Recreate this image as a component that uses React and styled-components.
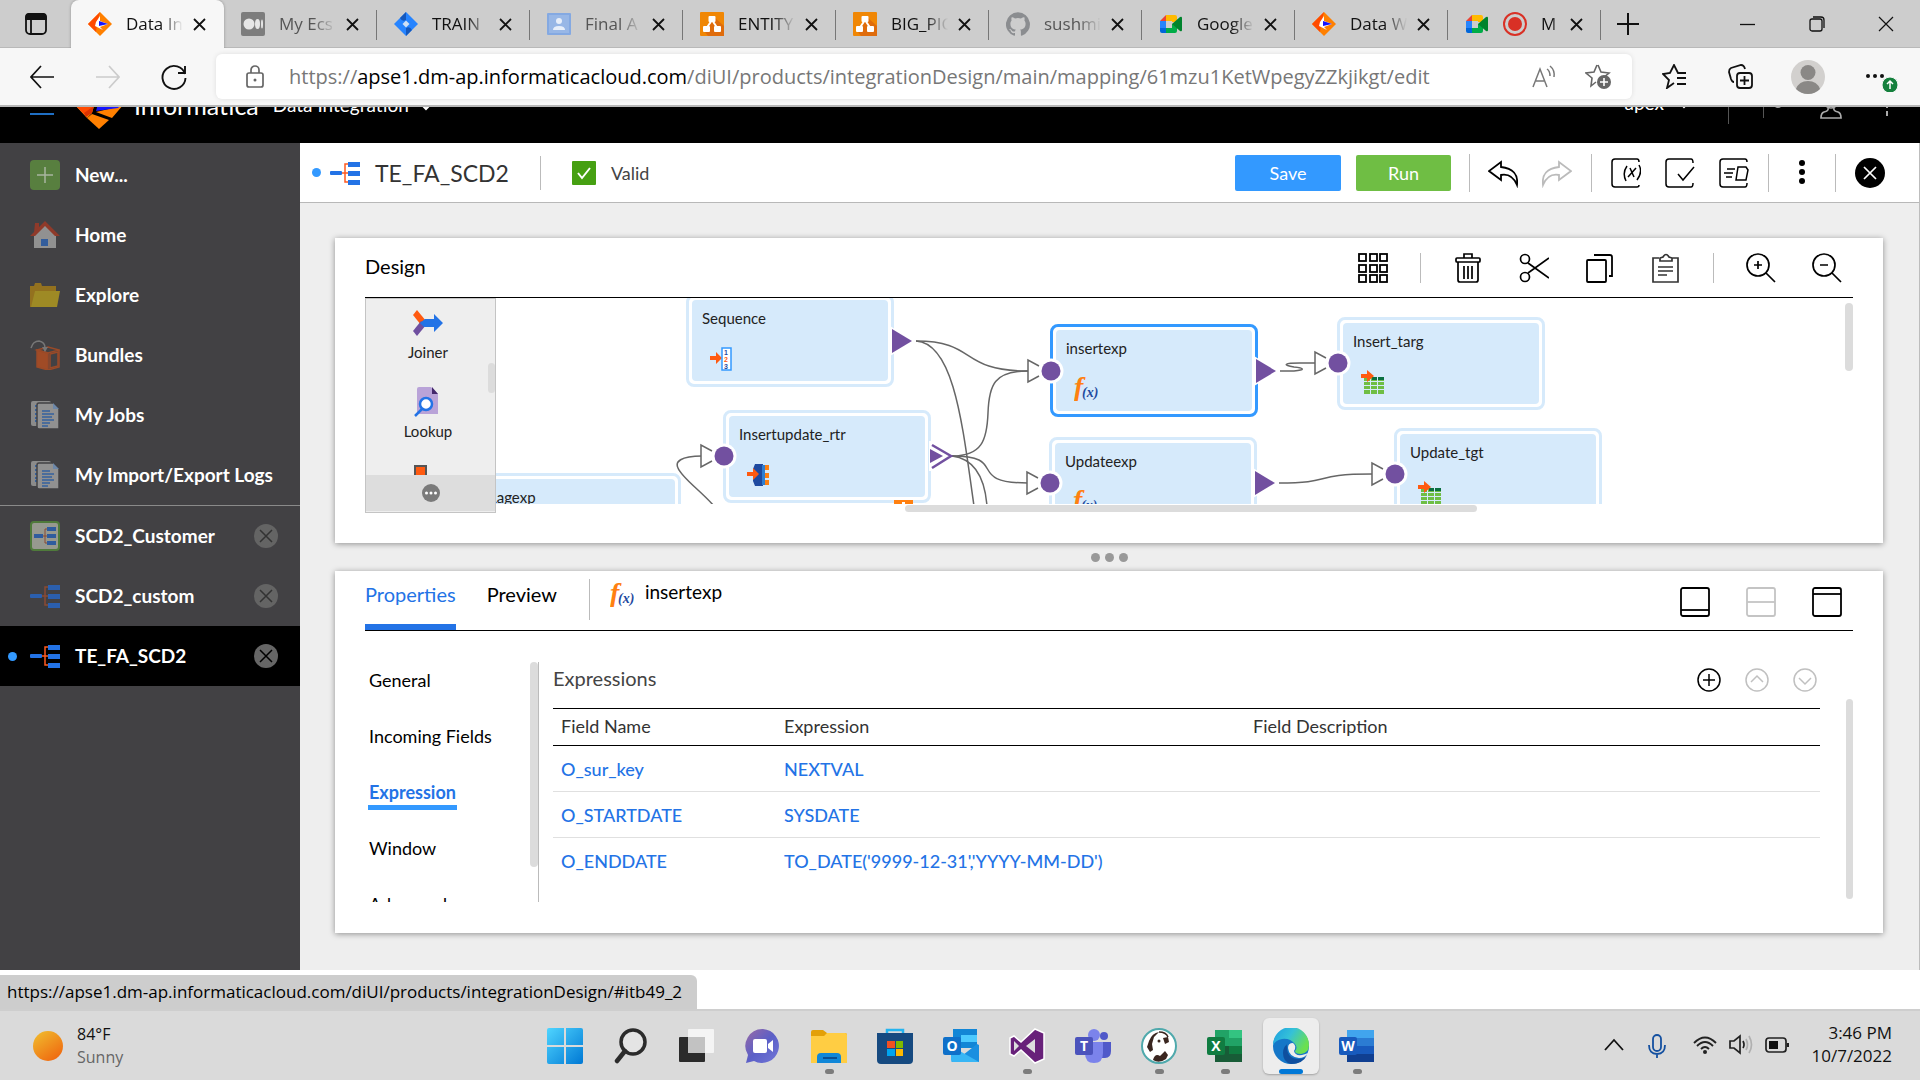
import React from "react";
import styled, { createGlobalStyle, css } from "styled-components";

const uiFont = `"Open Sans", "Noto Sans", sans-serif`;
const appFont = `Lato, "Liberation Sans", sans-serif`;

const GlobalStyle = createGlobalStyle`
  *, *::before, *::after { box-sizing: border-box; }
  body { margin: 0; background: #fff; font-family: ${appFont}; color: #000; }
  button, input { font: inherit; color: inherit; }
  button { border: 0; padding: 0; background: none; cursor: pointer; }
  a { color: inherit; text-decoration: none; }
  svg { display: block; flex: none; }
`;

const Screen = styled.div`
  display: flex;
  flex-direction: column;
  min-height: 100vh;
`;

/* ---------- browser chrome ---------- */

const TabStrip = styled.div`
  display: flex;
  align-items: stretch;
  height: 48px;
  background: #cdcdcd;
  box-shadow: inset 0 -1px 0 #b9b9b9;
  font-family: ${uiFont};
  font-size: 17px;
`;
const Square = styled.button`
  display: flex;
  align-items: center;
  justify-content: center;
  flex: none;
  width: ${(p) => p.$w || 30}px;
  height: ${(p) => p.$h || 30}px;
`;
const BrowserTab = styled.div`
  position: relative;
  display: flex;
  align-items: center;
  flex: 0 1 153px;
  min-width: 0;
  padding: 0 18px 0 17px;
  gap: 14px;
  color: ${(p) => (p.$dim ? "#555" : "#111")};
  ${(p) =>
    p.$active
      ? css`background: #f7f7f7; border-radius: 8px 8px 0 0; box-shadow: 0 0 3px rgba(0, 0, 0, 0.3);
          clip-path: inset(0 -4px 0 -4px);`
      : css`&::after {
          content: ""; position: absolute; right: 0; top: 10px; width: 1px; height: 30px;
          background: #777;
        }`}
`;
const TabTitle = styled.span`
  flex: 1;
  min-width: 0;
  overflow: hidden;
  white-space: nowrap;
  line-height: 24px;
  mask-image: linear-gradient(90deg, #000 60%, transparent);
`;
const CloseButton = styled.button`
  flex: none;
  margin-left: -4px;
`;
const WindowButtons = styled.div`
  display: flex;
  align-items: center;
  margin-left: auto;
`;
const AddressRow = styled.div`
  display: flex;
  align-items: center;
  height: 59px;
  padding: 0 21px;
  background: #f7f7f7;
  border-bottom: 2px solid #b7b7b7;
  gap: 24px;
`;
const AddressBox = styled.div`
  display: flex;
  align-items: center;
  flex: 1;
  min-width: 0;
  height: 45px;
  margin: 0 3px 0 -3px;
  padding: 0 19px 0 29px;
  border-radius: 6px;
  background: #fff;
  box-shadow: 0 0 5px rgba(0, 0, 0, 0.1);
  font-family: ${uiFont};
  font-size: 20px;
  color: #777;
`;
const AddressText = styled.div`
  flex: 1;
  min-width: 0;
  margin-left: 24px;
  overflow: hidden;
  white-space: nowrap;
  line-height: 30px;
  b { font-weight: 400; color: #000; }
`;
const NavGroup = styled.div`
  display: flex;
  align-items: center;
  gap: ${(p) => p.$gap}px;
`;

/* ---------- product header ---------- */

const ProductHeader = styled.header`
  display: flex;
  align-items: flex-end;
  height: 36px;
  padding: 0 31px 0 30px;
  overflow: hidden;
  background: #000;
  color: #fff;
`;
const MenuLine = styled.button`
  width: 24px;
  height: 30px;
  border-bottom: 2px solid #1f6fc4;
`;
const HeaderPart = styled.div`
  display: flex;
  align-items: flex-end;
  margin-left: ${(p) => p.$left || 0}px;
  padding-bottom: ${(p) => p.$bottom}px;
  font-size: ${(p) => p.$size || 20}px;
  line-height: 30px;
`;
const HeaderSpacer = styled.div`flex: 1;`;
const HeaderRule = styled.div`
  width: 1px;
  height: 30px;
  margin-left: ${(p) => p.$left}px;
  margin-bottom: ${(p) => p.$bottom}px;
  background: #555;
`;

/* ---------- workspace ---------- */

const Workspace = styled.div`
  display: flex;
  flex: 1;
  border-right: 1px solid #bdbdbd;
`;
const Sidebar = styled.nav`
  flex: none;
  width: 300px;
  padding-top: 2px;
  background: #424144;
  color: #fff;
`;
const SidebarGroup = styled.div`
  border-bottom: ${(p) => (p.$rule ? "1px solid #8a8a8a" : "0")};
`;
const SidebarRow = styled.div`
  display: flex;
  align-items: center;
  height: 60px;
  padding: 0 22px 0 8px;
  background: ${(p) => (p.$active ? "#000" : "transparent")};
`;
const Dot = styled.span`
  flex: none;
  width: 9px;
  height: 9px;
  margin-right: ${(p) => p.$gap || 13}px;
  border-radius: 50%;
  background: ${(p) => (p.$on ? "#3399ff" : "transparent")};
`;
const SidebarLink = styled.a`
  display: flex;
  align-items: center;
  flex: 1;
  gap: 15px;
  font-size: 19px;
  font-weight: 700;
  line-height: 24px;
  white-space: nowrap;
`;

const Main = styled.main`
  display: flex;
  flex-direction: column;
  flex: 1;
  min-width: 0;
  background: #eee;
`;
const MappingBar = styled.div`
  display: flex;
  align-items: center;
  height: 60px;
  padding: 0 34px 0 12px;
  background: #fff;
  border-bottom: 1px solid #b8b8b8;
`;
const MappingTitle = styled.h1`
  margin: 0 31px 0 15px;
  font-size: 23px;
  font-weight: 400;
  line-height: 30px;
  color: #333;
`;
const Rule = styled.span`
  flex: none;
  width: 1px;
  height: ${(p) => p.$h || 38}px;
  margin: 0 ${(p) => p.$m}px;
  background: #bbb;
`;
const ValidLabel = styled.label`
  display: flex;
  align-items: center;
  gap: 15px;
  margin-left: 31px;
  font-size: 18px;
  color: #444;
`;
const CheckBox = styled.span`
  display: grid;
  width: 24px;
  height: 24px;
  > * { grid-area: 1 / 1; }
  input { appearance: none; width: 24px; height: 24px; margin: 0; background: #46a012; border-radius: 1px; }
`;
const Spacer = styled.span`flex: 1;`;
const ActionButton = styled.button`
  height: 36px;
  width: ${(p) => p.$w}px;
  margin-left: 15px;
  border-radius: 2px;
  background: ${(p) => p.$bg};
  color: #fff;
  font-size: 18px;
`;

const Panels = styled.div`
  display: flex;
  flex-direction: column;
  flex: 1;
  padding: 35px 36px 37px 35px;
`;
const Card = styled.section`
  padding: 0 30px;
  background: #fff;
  box-shadow: 0 1px 6px rgba(0, 0, 0, 0.4);
  flex: ${(p) => (p.$grow ? "1" : "none")};
`;
const DesignHead = styled.div`
  display: flex;
  align-items: center;
  height: 60px;
  padding-right: 11px;
  border-bottom: 1px solid #000;
`;
const Heading = styled.h2`
  margin: 0;
  padding-bottom: 4px;
  font-size: 20px;
  font-weight: 400;
  line-height: 24px;
  color: ${(p) => p.$color || "#000"};
`;
const DesignBody = styled.div`
  display: flex;
  align-items: flex-start;
  padding-bottom: 30px;
`;
const Palette = styled.div`
  display: flex;
  flex-direction: column;
  flex: none;
  width: 131px;
  height: 215px;
  border: 1px solid #c4c4c4;
  background: #eee;
`;
const PaletteList = styled.div`
  display: flex;
  flex: 1;
  min-height: 0;
  overflow: hidden;
`;
const PaletteItems = styled.div`
  display: flex;
  flex-direction: column;
  align-items: center;
  flex: 1;
  padding: 7px 0 0 2px;
`;
const PaletteItem = styled.button`
  display: flex;
  flex-direction: column;
  align-items: center;
  flex: none;
  height: 79px;
  gap: 2px;
  font-size: 15px;
  line-height: 20px;
  color: #222;
`;
const PaletteMore = styled.button`
  display: flex;
  align-items: center;
  justify-content: center;
  height: 37px;
  background: #ddd;
  border-bottom: 1px solid #eee;
`;
const Thumb = styled.div`
  flex: none;
  width: ${(p) => p.$w}px;
  height: ${(p) => p.$h}px;
  margin-top: ${(p) => p.$top || 0}px;
  border-radius: 4px;
  background: #dcdcdc;
`;
const CanvasColumn = styled.div`
  flex: 1;
  min-width: 0;
`;
const CanvasArea = styled.div`
  position: relative;
  height: 206px;
  overflow: hidden;
`;
const HorizontalTrack = styled.div`
  padding: 1px 0 0 409px;
`;
const Links = styled.svg`
  position: absolute;
  left: 0;
  top: 0;
`;
const NodeBox = styled.div`
  position: absolute;
  left: ${(p) => p.$x}px;
  top: ${(p) => p.$y}px;
  width: 208px;
  height: 93px;
  padding: 3px;
  border: 3px solid ${(p) => (p.$selected ? "#3399ff" : "#d6eafb")};
  border-radius: 8px;
  background: #fff;
`;
const NodeFill = styled.div`
  height: 100%;
  padding: 8px 0 0 10px;
  border-radius: 4px;
  background: #d6eafb;
`;
const NodeTitle = styled.div`
  font-size: 15px;
  line-height: 20px;
  color: #222;
`;
const NodeIcon = styled.div`
  padding: 19px 0 0 8px;
`;

const Splitter = styled.div`
  display: flex;
  align-items: center;
  justify-content: center;
  gap: 5px;
  height: 28px;
  i { width: 9px; height: 9px; border-radius: 50%; background: #999; }
`;

const PropertyHead = styled.div`
  display: flex;
  align-items: flex-start;
  height: 60px;
  padding-right: 11px;
  border-bottom: 1px solid #000;
`;
const PropertyTab = styled.button`
  height: 59px;
  margin-right: 31px;
  padding-bottom: 8px;
  border-bottom: 6px solid ${(p) => (p.$active ? "#2373e6" : "transparent")};
  font-size: 20px;
  color: ${(p) => (p.$active ? "#2373e6" : "#000")};
`;
const HeadRule = styled.span`
  width: 1px;
  height: 41px;
  margin: 8px 20px 0 1px;
  background: #bbb;
`;
const SelectedName = styled.div`
  display: flex;
  align-items: flex-start;
  gap: 11px;
  margin-top: 8px;
  font-size: 19px;
  line-height: 26px;
  svg { margin-top: 4px; }
`;
const ViewButtons = styled.div`
  display: flex;
  gap: 36px;
  margin: 16px 0 0 auto;
`;
const PropertyBody = styled.div`
  display: flex;
  align-items: flex-start;
  padding: 31px 0;
`;
const SectionNav = styled.div`
  display: flex;
  flex: none;
  width: 174px;
  height: 240px;
  overflow: hidden;
  border-right: 1px solid #bbb;
`;
const SectionList = styled.div`
  display: flex;
  flex-direction: column;
  align-items: flex-start;
  flex: 1;
  padding: 4px 0 0 3px;
`;
const SectionButton = styled.button`
  flex: none;
  height: 32px;
  margin-bottom: 24px;
  padding: 0 1px;
  border-bottom: 5px solid ${(p) => (p.$active ? "#3399ff" : "transparent")};
  font-size: 18px;
  line-height: 26px;
  font-weight: ${(p) => (p.$active ? 700 : 400)};
  color: ${(p) => (p.$active ? "#2373e6" : "#000")};
`;
const Fields = styled.div`
  flex: 1;
  min-width: 0;
  margin: 0 26px 0 14px;
`;
const FieldsHead = styled.div`
  display: flex;
  align-items: center;
  justify-content: space-between;
  height: 46px;
  padding: 0 3px 10px 0;
`;
const FieldTable = styled.table`
  width: 100%;
  border-collapse: collapse;
  table-layout: fixed;
  font-size: 18px;
  border-top: 1px solid #000;
  th { height: 37px; padding: 0 8px 2px; text-align: left; font-weight: 400; color: #333; border-bottom: 1px solid #000; }
  td { height: 46px; padding: 0 8px; font-weight: 500; color: #2373e6; border-bottom: 1px solid #e0e0e0; white-space: nowrap; }
  tr:last-child td { border-bottom: 0; }
  col:nth-child(1) { width: 223px; }
  col:nth-child(2) { width: 469px; }
`;

/* ---------- status line and taskbar ---------- */

const StatusStrip = styled.div`
  display: flex;
  align-items: flex-end;
  height: 39px;
  background: #fff;
  font-family: ${uiFont};
`;
const StatusBubble = styled.div`
  height: 34px;
  padding: 0 15px 0 7px;
  border-radius: 0 6px 0 0;
  background: #cdcdcd;
  font-size: 17px;
  line-height: 34px;
`;
const Taskbar = styled.footer`
  display: grid;
  grid-template-columns: 1fr auto 1fr;
  align-items: center;
  height: 71px;
  padding: 0 28px 0 30px;
  background: #dadada;
  border-top: 2px solid #cecece;
  font-family: ${uiFont};
  font-size: 16px;
  line-height: 23px;
  color: #111;
`;
const Weather = styled.button`
  display: flex;
  align-items: center;
  justify-self: start;
  gap: 14px;
  padding-left: 3px;
  text-align: left;
  span { display: block; color: #666; }
`;
const Apps = styled.div`
  display: flex;
  gap: 10px;
`;
const AppButton = styled.button`
  display: flex;
  flex-direction: column;
  align-items: center;
  justify-content: flex-end;
  gap: 5px;
  width: 56px;
  height: 56px;
  border-radius: 6px;
  background: ${(p) => (p.$active ? "#ededed" : "transparent")};
  box-shadow: ${(p) => (p.$active ? "0 1px 2px rgba(0,0,0,.25)" : "none")};
`;
const RunMark = styled.i`
  height: 5px;
  width: ${(p) => (p.$active ? 24 : 9)}px;
  border-radius: 3px;
  background: ${(p) => (p.$active ? "#0078d7" : p.$on ? "#7c7c7c" : "transparent")};
`;
const Tray = styled.div`
  display: flex;
  align-items: center;
  justify-self: end;
`;
const TrayStatus = styled.button`
  display: flex;
  gap: 12px;
  margin-left: 27px;
`;
const Clock = styled.button`
  margin-left: 22px;
  padding-bottom: 4px;
  text-align: right;
  font-size: 17px;
`;

/* ---------- drawings ---------- */

const Svg = ({ s = 24, w, h, vb, sw = 1.5, c = "none", stroke = "currentColor", children }) => (
  <svg width={w || s} height={h || s} viewBox={vb || `0 0 ${w || s} ${h || s}`} fill={c} stroke={stroke} strokeWidth={sw} aria-hidden="true">
    {children}
  </svg>
);
const Art = (p) => <Svg stroke="none" sw={0} {...p} />;

const Cross = ({ s = 13, sw = 1.8, color = "#111" }) => (
  <Svg s={s} sw={sw} stroke={color}><path d={`M1 1L${s - 1} ${s - 1}M${s - 1} 1L1 ${s - 1}`} /></Svg>
);

const InfaIcon = () => (
  <Art s={24}>
    <path d="M12 0L24 12L12 24L0 12Z" fill="#ff8000" />
    <path d="M12 0L0 12L8 20L9 12Z" fill="#ff4a00" />
    <path d="M12 4L12 9L20 12L12 15L15 18L7 14L8 10Z" fill="#fff" />
    <path d="M11 9L20 12L11 14Z" fill="#1414ff" />
  </Art>
);
const MediumIcon = () => (
  <Art s={24}>
    <rect width="24" height="24" rx="2" fill="#7d7d7d" />
    <circle cx="8" cy="12" r="5.5" fill="#e6e6e6" /><ellipse cx="16.500" cy="12" rx="2.500" ry="5" fill="#e6e6e6" /><ellipse cx="21" cy="12" rx="1" ry="4.500" fill="#e6e6e6" />
  </Art>
);
const JiraIcon = () => (
  <Art s={24}>
    <path d="M12 0L24 12L12 24L0 12Z" fill="#2684ff" />
    <path d="M12 0L6 6Q8 10 12 8Z" fill="#1558bc" /><path d="M12 24L18 18Q16 14 12 16Z" fill="#1558bc" />
    <path d="M12 8.500L15.500 12L12 15.500L8.500 12Z" fill="#cfe0f5" />
  </Art>
);
const PersonIcon = () => (
  <Art s={24}>
    <rect width="24" height="22" y="1" rx="1" fill="#84a9e2" /><rect x="2" y="3" width="20" height="18" fill="#98b7e6" />
    <circle cx="12" cy="9" r="3" fill="#e8effa" /><path d="M6 18q0-4 6-4t6 4z" fill="#e8effa" />
  </Art>
);
const DrawioIcon = () => (
  <Art s={24}>
    <rect width="24" height="24" rx="1" fill="#f08705" /><path d="M14 5L24 14V24H8L5 20Z" fill="#df6c0c" />
    <path d="M12 8L6 17M12 8L18 17" stroke="#fff" strokeWidth="2" />
    <rect x="8.500" y="4" width="7" height="6" rx="1" fill="#fff" /><rect x="3" y="14" width="7" height="6" rx="1" fill="#fff" /><rect x="14" y="14" width="7" height="6" rx="1" fill="#fff" />
  </Art>
);
const GithubIcon = () => (
  <Art s={24} c="#8b8d90">
    <path d="M12 .3a12 12 0 0 0-3.8 23.400c.6.100.800-.300.800-.600v-2.100c-3.300.700-4-1.600-4-1.600-.500-1.400-1.300-1.700-1.300-1.700-1.100-.800.100-.700.100-.700 1.200.100 1.800 1.200 1.800 1.200 1.100 1.800 2.800 1.300 3.500 1 .100-.800.400-1.300.800-1.600-2.700-.300-5.500-1.300-5.500-5.900 0-1.300.500-2.400 1.200-3.200-.100-.300-.500-1.500.100-3.200 0 0 1-.300 3.300 1.200a11.500 11.500 0 0 1 6 0c2.300-1.500 3.300-1.200 3.300-1.200.600 1.700.200 2.900.100 3.200.800.800 1.200 1.900 1.200 3.200 0 4.600-2.800 5.600-5.500 5.900.400.400.800 1.100.800 2.200v3.300c0 .300.200.700.800.600A12 12 0 0 0 12 .3z" />
  </Art>
);
const MeetIcon = () => (
  <Art s={24}>
    <path d="M1 9L7 3V9Z" fill="#ea4335" /><path d="M7 3h9q2 0 2 2v5h-5V9H7Z" fill="#ffba00" />
    <path d="M1 9h6v7H1Z" fill="#2684fc" /><path d="M1 16h6v5H3q-2 0-2-2Z" fill="#0066da" />
    <path d="M7 16h6v-4h5v7q0 2-2 2H7Z" fill="#00ac47" /><path d="M13 12L21 5q2-1 2 1v12q0 2-2 1Z" fill="#00832d" />
    <rect x="7" y="9" width="6" height="7" fill="#cdcdcd" />
  </Art>
);
const RecordIcon = () => (
  <Svg s={24} sw={2} stroke="#d93025"><circle cx="12" cy="12" r="11" /><circle cx="12" cy="12" r="7" fill="#d93025" stroke="none" /></Svg>
);

const MappingIcon = ({ dim }) => (
  <Svg w={30} h={24} sw={1.500} stroke={dim ? "#8a4a33" : "#ff5a1f"}>
    <path d="M11 12H24M24 3H15V21H24" />
    <g fill={dim ? "#2b5fae" : "#2373e6"} stroke="none"><rect y="10" width="12" height="4" rx="1" /><rect x="18" y="1" width="12" height="5" /><rect x="18" y="10" width="12" height="5" /><rect x="18" y="19" width="12" height="5" /></g>
  </Svg>
);
const NewIcon = () => (
  <Svg s={30} sw={1.500} stroke="#a8b5a0"><rect width="30" height="30" rx="4" fill="#587f3f" stroke="none" /><path d="M7 15H23M15 7V23" /></Svg>
);
const HomeIcon = () => (
  <Art s={30}>
    <path d="M5 3h4v10H4Z" fill="#8f3a2a" /><path d="M4 28V15L15 4L26 15V28Z" fill="#919191" /><path d="M0 16L15 1L30 16H25L15 6L5 16Z" fill="#8f3a2a" /><rect x="11" y="19" width="7" height="7" fill="#335d9c" />
  </Art>
);
const FolderIcon = () => (
  <Art s={30}><path d="M0 6h4l1-3h6l1 3h14v21H0Z" fill="#93711f" /><path d="M5 11H30L27 27H1Z" fill="#9e8a25" /></Art>
);
const BundleIcon = () => (
  <Svg s={30} sw={1.500} stroke="#9a4a28">
    <path d="M7 10L18 13V30L7 27Z" fill="#a04b26" /><path d="M7 10L18 7L29 10L18 13Z" /><path d="M29 10V27L18 30" /><path d="M20 14L28 12V26L20 28Z" fill="#424144" />
    <path d="M1 8Q3 1 9 1Q15 2 15 8" stroke="#777" /><path d="M12 7L15 12L18 7Z" fill="#777" stroke="none" />
  </Svg>
);
const LogsIcon = () => (
  <Art s={30}>
    <rect x="1" y="1" width="20" height="25" rx="2" fill="#8b8b8b" /><path d="M5 6H9M5 10H9M5 14H9M5 18H9M5 21H9" stroke="#35619f" strokeWidth="2" />
    <path d="M9 3H23L29 9V29H9Q7 29 7 27V5Q7 3 9 3Z" fill="#919191" stroke="#424144" strokeWidth="1.500" /><path d="M23 3V9H29Z" fill="#6d87a8" />
    <path d="M12 11H20M12 14H24M12 17H22M12 20H24M12 23H20M12 26H18" stroke="#35619f" strokeWidth="1.500" />
  </Art>
);
const CustomerIcon = () => (
  <Svg s={30} sw={1}>
    <rect x="1" y="1" width="28" height="28" rx="3" fill="#97998f" stroke="#4f7a3b" strokeWidth="2" />
    <path d="M12 15H20M20 8H15V22H20" stroke="#8a4a33" />
    <g fill="#2f5c9e" stroke="none"><rect x="4" y="13" width="9" height="4" /><rect x="17" y="6" width="9" height="4" /><rect x="17" y="13" width="9" height="4" /><rect x="17" y="20" width="9" height="4" /></g>
  </Svg>
);
const RoundClose = ({ dark }) => (
  <Svg s={24} sw={1.500} stroke={dark ? "#000" : "#333"}><circle cx="12" cy="12" r="12" fill={dark ? "#666" : "#646464"} stroke="none" /><path d="M6 6L18 18M18 6L6 18" /></Svg>
);

const FxIcon = () => (
  <Art s={24}>
    <text x="0" y="19" fontFamily="Liberation Serif" fontSize="28" fontWeight="700" fontStyle="italic" fill="#ff8010">f</text>
    <text x="8" y="20" fontFamily="Liberation Serif" fontSize="14" fontWeight="700" fontStyle="italic" fill="#1f4aa0">(x)</text>
  </Art>
);
const arrow = "M0 9h6V5l6 6l-6 6v-4H0Z";
const SequenceIcon = () => (
  <Art s={24}>
    <path d={arrow} fill="#ff5a10" />
    <rect x="12" y="1" width="9" height="22" fill="#fff" stroke="#3399ff" strokeWidth="1.500" />
    <g fontFamily="Liberation Sans" fontSize="7" fontWeight="700"><text x="14" y="8" fill="#1f4aa0">1</text><text x="14" y="15" fill="#ff5a10">2</text><text x="14" y="22" fill="#1f4aa0">3</text></g>
  </Art>
);
const RouterIcon = () => (
  <Art s={24}>
    <path d="M8 1H16V23H8L6 18V6Z" fill="#1f4aa0" /><path d="M16 2h6v5h-6zM16 10h6v5h-6zM16 17h6v5h-6z" fill="#ff8010" /><path d="M15 2h3v20h-3z" fill="#2f7fd0" /><path d={arrow} fill="#ff5a10" stroke="#d6eafb" />
  </Art>
);
const TargetIcon = () => (
  <Art s={24}>
    <rect x="3" y="7" width="20" height="17" fill="#6fbe44" /><rect x="11" y="7" width="12" height="3" fill="#0b7040" />
    <path d="M3 11.500H23M3 15.500H23M3 19.500H23M9.500 7V24M16.500 7V24" stroke="#d6eafb" strokeWidth="1" />
    <path d="M0 4h6V0l7 6l-7 6v-4H0Z" fill="#ff5a10" />
  </Art>
);
const JoinerIcon = () => (
  <Art w={30} h={34} vb="0 -4 30 34">
    <path d="M4 0L13 11L8 15L0 5Z" fill="#ff5a10" /><path d="M4 26L13 15L8 11L0 21Z" fill="#6f4fa0" /><path d="M7 13L12 9H21V4L30 13L21 22V17H11Z" fill="#2373e6" />
  </Art>
);
const LookupIcon = () => (
  <Svg w={30} h={34} vb="0 -2 30 34" sw={2.500} stroke="#2373e6">
    <path d="M6 0H18L25 7V27H4V2Q4 0 6 0Z" fill="#b9a3d8" stroke="none" /><path d="M19 0V7H25Z" fill="#43286b" stroke="none" />
    <circle cx="13" cy="17" r="6" fill="#fff" /><path d="M9 22L2 29" />
  </Svg>
);

const OutPort = ({ x, y }) => <path d={`M${x} ${y - 12}L${x + 20} ${y}L${x} ${y + 12}Z`} fill="#7250a0" stroke="#fff" strokeWidth="3" paintOrder="stroke" />;
const InPort = ({ x, y }) => (
  <g>
    <circle cx={x} cy={y} r="12.500" fill="#fff" />
    <path d={`M${x - 12} ${y - 5}L${x - 23} ${y - 11}V${y + 11}L${x - 12} ${y + 5}`} fill="#fff" stroke="#666" strokeWidth="1.500" />
    <circle cx={x} cy={y} r="9.500" fill="#7250a0" />
  </g>
);

const nodes = [
  { name: "Lagexp", x: -23, y: 175 },
  { name: "Sequence", x: 190, y: -4, icon: <SequenceIcon /> },
  { name: "Insertupdate_rtr", x: 227, y: 112, icon: <RouterIcon /> },
  { name: "insertexp", x: 554, y: 26, icon: <FxIcon />, selected: true },
  { name: "Updateexp", x: 553, y: 139, icon: <FxIcon /> },
  { name: "Insert_targ", x: 841, y: 19, icon: <TargetIcon /> },
  { name: "Update_tgt", x: 898, y: 130, icon: <TargetIcon /> },
];

function DesignCanvas() {
  return (
    <CanvasArea>
      {nodes.map((n) => (
        <NodeBox key={n.name} $x={n.x} $y={n.y} $selected={n.selected}>
          <NodeFill>
            <NodeTitle>{n.name}</NodeTitle>
            <NodeIcon>{n.icon}</NodeIcon>
          </NodeFill>
        </NodeBox>
      ))}
      <Links width="1347" height="206" viewBox="496 298 1347 206" fill="none" aria-hidden="true">
        <g stroke="#666" strokeWidth="1.500">
          <path d="M916 341C978 341 958 371 1028 371" />
          <path d="M916 341C955 343 963 430 974 506" />
          <path d="M952 456C982 456 987 440 988 413C989 385 994 371 1028 371" />
          <path d="M952 456C1010 456 964 483 1028 483" />
          <path d="M952 456C976 459 985 480 987 506" />
          <path d="M702 456C680 456 675 462 678 468C682 478 700 490 714 506" />
          <path d="M1280 371H1294C1306 370 1304 368 1294 367C1282 365 1284 363 1300 363H1315" />
          <path d="M1279 483C1335 483 1310 474 1372 474" />
        </g>
        <InPort x={1051} y={371} /><InPort x={1050} y={483} /><InPort x={724} y={456} /><InPort x={1338} y={363} /><InPort x={1395} y={474} />
        <OutPort x={892} y={341} /><OutPort x={1256} y={371} /><OutPort x={1255} y={483} />
        <path d="M929 441H935V471H929Z" fill="#fff" />
        <path d="M930 449L943 456L930 463Z" fill="#7250a0" />
        <path d="M932 445L951 456L932 468" stroke="#7250a0" strokeWidth="2.500" />
        <path d="M894 500H913V506H894Z" fill="#ff8010" /><path d="M902 502H905V506H902Z" fill="#fff" />
      </Links>
    </CanvasArea>
  );
}

const tabs = [
  ["Data In", <InfaIcon />, { $active: true }],
  ["My Ecs", <MediumIcon />, { $dim: true }],
  ["TRAIN", <JiraIcon />, {}],
  ["Final A", <PersonIcon />, { $dim: true }],
  ["ENTITY", <DrawioIcon />, {}],
  ["BIG_PIC", <DrawioIcon />, {}],
  ["sushmi", <GithubIcon />, { $dim: true }],
  ["Google", <MeetIcon />, {}],
  ["Data W", <InfaIcon />, {}],
  ["M", <><MeetIcon /><RecordIcon /></>, {}],
];

function BrowserChrome() {
  return (
    <>
      <TabStrip>
        <Square $w={71} $h={48} aria-label="Tab actions">
          <Svg s={22} sw={1.800} stroke="#111"><rect x="1" y="1" width="20" height="20" rx="4" /><path d="M1 6V4q0-3 3-3h14q3 0 3 3v2zM6 6V21" /><rect x="1" y="2" width="20" height="4" fill="#111" stroke="none" /></Svg>
        </Square>
        {tabs.map(([title, icon, flags]) => (
          <BrowserTab key={title} {...flags}>
            {icon}
            <TabTitle>{title}</TabTitle>
            <CloseButton aria-label={`Close ${title}`}><Cross /></CloseButton>
          </BrowserTab>
        ))}
        <Square $w={54} $h={48} aria-label="New tab"><Svg s={22} sw={2} stroke="#111"><path d="M11 0V22M0 11H22" /></Svg></Square>
        <WindowButtons>
          <Square $w={70} $h={48} aria-label="Minimize"><Svg s={15} sw={1.300} stroke="#111"><path d="M0 7.500H15" /></Svg></Square>
          <Square $w={69} $h={48} aria-label="Restore"><Svg s={16} sw={1.300} stroke="#111"><rect x="1" y="3" width="12" height="12" rx="2" /><path d="M4 1h8q3 0 3 3v8" /></Svg></Square>
          <Square $w={69} $h={48} aria-label="Close window"><Cross s={16} sw={1.200} /></Square>
        </WindowButtons>
      </TabStrip>
      <AddressRow>
        <NavGroup $gap={24}>
          <Square $w={42} aria-label="Back"><Svg s={24} sw={1.700} stroke="#111"><path d="M24 12H1M11 1L1 12L11 23" /></Svg></Square>
          <Square $w={42} aria-label="Forward"><Svg s={24} sw={1.700} stroke="#ccc"><path d="M0 12H23M13 1L23 12L13 23" /></Svg></Square>
          <Square $w={42} aria-label="Refresh"><Svg s={26} sw={1.900} stroke="#111"><path d="M24 10A11.500 11.500 0 1 0 24.500 14M24 2V9H17" /></Svg></Square>
        </NavGroup>
        <AddressBox>
          <Svg w={20} h={24} sw={1.700} stroke="#666"><rect x="2" y="8" width="16" height="14" rx="2" /><path d="M6 8V5a4 4 0 0 1 8 0v3" /><circle cx="10" cy="15" r="1.500" fill="#666" stroke="none" /></Svg>
          <AddressText>https://<b>apse1.dm-ap.informaticacloud.com</b>/diUI/products/integrationDesign/main/mapping/61mzu1KetWpegyZZkjikgt/edit</AddressText>
          <NavGroup $gap={24}>
            <Square aria-label="Read aloud"><Svg s={24} sw={1.500} stroke="#777"><path d="M1 22L8 4L15 22M4 16H12M15 4Q18 6 18 11M18 1Q23 5 22 12" /></Svg></Square>
            <Square aria-label="Add to favorites"><Svg s={27} sw={1.600} stroke="#666"><path d="M13 2L16 9L24 10L18 15M11 19L6 23L7 15L1 10L9 9L12 2" /><circle cx="19" cy="19" r="7" fill="#666" stroke="none" /><path d="M19 15V23M15 19H23" stroke="#fff" /></Svg></Square>
          </NavGroup>
        </AddressBox>
        <NavGroup $gap={36}>
          <Square aria-label="Favorites"><Svg s={25} sw={1.800} stroke="#111"><path d="M24 9H16L12 1L8 9L1 10L7 16L5 24L12 19M15 14H24M15 20H24" /></Svg></Square>
          <Square aria-label="Collections"><Svg s={25} sw={1.800} stroke="#111"><rect x="9" y="9" width="15" height="15" rx="3" /><path d="M16.500 12V21M12 16.500H21M6 18Q4 18 3 15L1 8Q1 5 3 4L13 1Q16 1 17 5" /></Svg></Square>
          <Square $w={34} $h={34} aria-label="Profile"><Art s={34}><circle cx="17" cy="17" r="17" fill="#d2d0ce" /><circle cx="17" cy="12.500" r="7.500" fill="#8a8886" /><path d="M5 29Q8 21 17 21T29 29Q24 34 17 34T5 29Z" fill="#8a8886" /></Art></Square>
          <Square $w={38} aria-label="Settings"><Svg w={38} h={30} stroke="none"><g fill="#111"><circle cx="7" cy="14" r="2" /><circle cx="14" cy="14" r="2" /><circle cx="21" cy="14" r="2" /></g><circle cx="29" cy="23" r="8" fill="#15803d" stroke="#f7f7f7" strokeWidth="1" /><path d="M29 27V19M26 22L29 19L32 22" stroke="#fff" strokeWidth="1.500" /></Svg></Square>
        </NavGroup>
      </AddressRow>
    </>
  );
}

const sidebarMain = [["New...", <NewIcon />], ["Home", <HomeIcon />], ["Explore", <FolderIcon />], ["Bundles", <BundleIcon />], ["My Jobs", <LogsIcon />], ["My Import/Export Logs", <LogsIcon />]];
const sidebarOpen = [["SCD2_Customer", <CustomerIcon />], ["SCD2_custom", <MappingIcon dim />], ["TE_FA_SCD2", <MappingIcon />, true]];

const fields = [
  ["O_sur_key", "NEXTVAL"],
  ["O_STARTDATE", "SYSDATE"],
  ["O_ENDDATE", "TO_DATE('9999-12-31','YYYY-MM-DD')"],
];

const letterApp = (letter, tile, sheets) => (
  <Art s={36}>
    {sheets}
    <rect x="0" y="9" width="18" height="18" rx="2" fill={tile} />
    <text x="9" y="23" textAnchor="middle" fontFamily="Open Sans" fontSize="14" fontWeight="700" fill="#fff">{letter}</text>
  </Art>
);

const apps = [
  ["Start", <Art s={36}><defs><linearGradient id="win" x1="0" y1="0" x2="1" y2="1"><stop offset="0" stopColor="#4fd5ff" /><stop offset="1" stopColor="#0078d4" /></linearGradient></defs><path d="M2 0H17V17H0V2Q0 0 2 0ZM19 0H34Q36 0 36 2V17H19ZM0 19H17V36H2Q0 36 0 34ZM19 19H36V34Q36 36 34 36H19Z" fill="url(#win)" /></Art>],
  ["Search", <Svg s={36} sw={3.500} stroke="#2b2b2b"><circle cx="20" cy="14" r="12" fill="#e4e4e4" /><path d="M12 23L4 33" strokeWidth="4.500" strokeLinecap="round" /></Svg>],
  ["Task view", <Art s={36}><rect x="0" y="9" width="26" height="25" rx="1" fill="#2b2b2b" /><rect x="9" y="1" width="26" height="24" rx="1" fill="#f4f4f4" /><rect x="9" y="9" width="17" height="16" fill="#c2c2c2" /></Art>],
  ["Chat", <Art s={36}><defs><linearGradient id="chat" x1="0" y1="0" x2="1" y2="1"><stop offset="0" stopColor="#9a6aa5" /><stop offset=".5" stopColor="#5b5fc7" /><stop offset="1" stopColor="#7277d8" /></linearGradient></defs><path d="M18 1A17 17 0 1 1 9 33L1 35L3 27A17 17 0 0 1 18 1Z" fill="url(#chat)" /><rect x="8" y="11" width="14" height="14" rx="2" fill="#fff" /><path d="M23 16L28 12V24L23 20Z" fill="#fff" /></Art>],
  ["File Explorer", <Art s={36}><path d="M0 4Q0 2 2 2H12L16 5H34Q36 5 36 7V35H0Z" fill="#e3a008" /><path d="M0 8H13L16 5H34Q36 5 36 7V35H0Z" fill="#ffcd43" /><path d="M6 35V29Q6 25 10 25H26Q30 25 30 29V35Z" fill="#1187d8" /><path d="M12 30H26" stroke="#0b4f94" strokeWidth="2" /></Art>, "on"],
  ["Store", <Art s={36}><path d="M10 8V2H26V8" fill="none" stroke="#24b4f0" strokeWidth="2.500" /><path d="M0 5H36V32Q36 36 32 36H4Q0 36 0 32Z" fill="#164a80" /><path d="M10 13h8v7h-8z" fill="#f25022" /><path d="M19 13h7v7h-7z" fill="#7fba00" /><path d="M10 21h8v7h-8z" fill="#00a4ef" /><path d="M19 21h7v7h-7z" fill="#ffb900" /></Art>],
  ["Outlook", letterApp("O", "#0f70c9", <><path d="M10 1H34V20H10Z" fill="#1286d6" /><path d="M18 7H34V14H18Z" fill="#4ccaff" /><path d="M34 16L20 27L8 34H36V17Z" fill="#1a8fe0" /><path d="M8 18L36 34H10Q8 34 8 32Z" fill="#38b6f5" /></>)],
  ["Visual Studio", <Art s={36}><path d="M26 1L35 5V31L26 35L12 22L5 28L1 26V10L5 8L12 14Z" fill="#68217a" stroke="#fff" strokeWidth="1.500" /><path d="M26 11V25L17 18Z" fill="#ddd" /><path d="M5 13V23L10 18Z" fill="#ddd" /></Art>, "on"],
  ["Teams", letterApp("T", "#4b53bc", <><circle cx="29" cy="8" r="4" fill="#5059c9" /><circle cx="19" cy="7" r="6" fill="#7b83eb" /><path d="M24 14H36V23Q36 30 30 30H24Z" fill="#5059c9" /><path d="M10 14H28V25Q28 35 19 35T10 25Z" fill="#7b83eb" /></>)],
  ["DBeaver", <Art s={36}><circle cx="18" cy="18" r="17" fill="#fff" stroke="#4fa9ac" strokeWidth="2" /><path d="M8 13Q11 5 18 4L13 9L11 16L12 22L9 24L6 19ZM22 10L27 9L28 14L24 16ZM12 32Q14 25 19 28L24 23L27 27L25 31Q18 36 12 32Z" fill="#3a2620" /><path d="M18 4Q25 4 27 9" stroke="#3a2620" strokeWidth="1.500" /><circle cx="18" cy="13" r="1.500" fill="#3a2620" /></Art>, "on"],
  ["Excel", letterApp("X", "#107c41", <><path d="M8 2H35V34H8Z" fill="#21a366" /><path d="M22 2H35V10H22Z" fill="#33c481" /><path d="M8 18H22V34H8Z" fill="#185c37" /><path d="M22 18H35V26H22Z" fill="#107c41" /><path d="M22 26H35V34H22Z" fill="#185c37" /></>), "on"],
  ["Edge", <Art s={36}><defs><linearGradient id="edge" x1="0" y1="0" x2="1" y2=".5"><stop offset="0" stopColor="#1b9de2" /><stop offset=".5" stopColor="#35c1d8" /><stop offset="1" stopColor="#6be04f" /></linearGradient></defs><circle cx="18" cy="18" r="18" fill="#1577c8" /><path d="M0 17A18 18 0 0 1 36 17Q36 25 28 26Q22 26 22 23Q25 20 22 16Q17 10 9 11Q3 12 0 17Z" fill="url(#edge)" /><path d="M14 19Q14 31 26 31Q31 31 34 27Q30 36 18 36Q10 34 10 25Q10 18 16 15Q13 16 14 19Z" fill="#0f4f9e" /><path d="M15 20Q15 15 20 15Q24 18 21 23Q22 28 29 27Q33 26 35 25Q32 30 26 30Q16 29 15 20Z" fill="#eee" /></Art>, "active"],
  ["Word", letterApp("W", "#185abd", <><path d="M8 2H35V34H8Z" fill="#2b7cd3" /><path d="M8 2H35V10H8Z" fill="#41a5ee" /><path d="M8 18H35V26H8Z" fill="#185abd" /><path d="M8 26H35V34H8Z" fill="#103f91" /></>), "on"],
];

export default function App() {
  return (
    <Screen>
      <GlobalStyle />
      <BrowserChrome />

      <ProductHeader>
        <HeaderPart $bottom={28}><MenuLine aria-label="Menu" /></HeaderPart>
        <HeaderPart $left={20} $bottom={14}>
          <Art s={50}>
            <path d="M25 0L50 25L38 39L22 33L47 27L20 27L18 34L13 39L0 25Z" fill="#ff8000" />
            <path d="M0 25L14 26L20 27L12 37Z" fill="#ff4a00" /><path d="M20 27L18 34L12 38L10 34Z" fill="#dd3300" />
            <path d="M24 25L47 26L44 29L22 32Z" fill="#1414ff" /><path d="M13 39L18 35L35 41L25 50Z" fill="#ff8000" />
          </Art>
        </HeaderPart>
        <HeaderPart $left={10} $bottom={23} $size={25}>Informatica</HeaderPart>
        <HeaderPart $left={14} $bottom={23} $size={19}>Data Integration</HeaderPart>
        <HeaderPart $left={11} $bottom={32}><Svg w={12} h={8} sw={2} stroke="#fff"><path d="M1 1L6 6L11 1" /></Svg></HeaderPart>
        <HeaderSpacer />
        <HeaderPart $bottom={25} $size={19}>apex</HeaderPart>
        <HeaderPart $left={14} $bottom={34}><Svg w={12} h={8} sw={2} stroke="#fff"><path d="M1 1L6 6L11 1" /></Svg></HeaderPart>
        <HeaderRule $left={38} $bottom={19} /><HeaderRule $left={34} $bottom={25} />
        <HeaderPart $left={8} $bottom={34}><Art s={12}><circle cx="6" cy="6" r="5" fill="#aaa" /></Art></HeaderPart>
        <HeaderPart $left={36} $bottom={24}><Svg w={22} h={26} sw={1.700} stroke="#aaa"><circle cx="11" cy="8" r="7" /><path d="M8 15Q9 18 4 19Q1 20 1 25H21Q21 20 18 19Q13 18 14 15" /></Svg></HeaderPart>
        <HeaderPart $left={43} $bottom={24}><Svg w={4} h={24} sw={2} stroke="#aaa"><path d="M2 0V24" strokeDasharray="5 3" /></Svg></HeaderPart>
      </ProductHeader>

      <Workspace>
        <Sidebar>
          <SidebarGroup $rule>
            {sidebarMain.map(([label, icon]) => (
              <SidebarRow key={label}><Dot /><SidebarLink href="#">{icon}{label}</SidebarLink></SidebarRow>
            ))}
          </SidebarGroup>
          <SidebarGroup>
            {sidebarOpen.map(([label, icon, active]) => (
              <SidebarRow key={label} $active={active}>
                <Dot $on={active} />
                <SidebarLink href="#">{icon}{label}</SidebarLink>
                <Square $w={24} $h={24} aria-label={`Close ${label}`}><RoundClose dark={active} /></Square>
              </SidebarRow>
            ))}
          </SidebarGroup>
        </Sidebar>

        <Main>
          <MappingBar>
            <Dot $on $gap={9} /><MappingIcon />
            <MappingTitle>TE_FA_SCD2</MappingTitle>
            <Rule $h={34} $m={0} />
            <ValidLabel>
              <CheckBox>
                <input type="checkbox" defaultChecked />
                <Svg s={24} sw={2} stroke="#fff"><path d="M6 12L10 17L18 7" /></Svg>
              </CheckBox>
              Valid
            </ValidLabel>
            <Spacer />
            <ActionButton $w={106} $bg="#3399ff">Save</ActionButton>
            <ActionButton $w={95} $bg="#6fbe44">Run</ActionButton>
            <Rule $m={18} />
            <NavGroup $gap={24}>
              <Square aria-label="Undo"><Svg s={30} sw={1.800}><path d="M13 9V4L1 13L13 22V17Q24 15 29 27Q31 11 13 9Z" /></Svg></Square>
              <Square aria-label="Redo"><Svg s={30} sw={1.800} stroke="#bbb"><path d="M17 9V4L29 13L17 22V17Q6 15 1 27Q-1 11 17 9Z" /></Svg></Square>
            </NavGroup>
            <Rule $m={19} />
            <NavGroup $gap={24}>
              <Square aria-label="Parameters"><Svg s={30} sw={1.500}><path d="M26 1H4Q1 1 1 4V26Q1 29 4 29H26Q28 29 28 27M26 1Q28 1 28 4" /><path d="M16 8Q11 15 15 23M28 7Q32 14 26 22M17 19L25 10M19 10L23 19" /></Svg></Square>
              <Square aria-label="Validate"><Svg s={30} sw={1.500}><path d="M26 1H4Q1 1 1 4V26Q1 29 4 29H26Q28 29 28 25M26 1Q28 1 28 5" /><path d="M13 16L18 22L29 9" /></Svg></Square>
              <Square aria-label="Versions"><Svg s={30} sw={1.500}><path d="M26 1H4Q1 1 1 4V26Q1 29 4 29H26Q28 29 28 25M26 1Q28 1 28 4" /><path d="M19 9H27L29 12L27 22H17ZM8 11H16M5 15H14M7 19H13" /></Svg></Square>
            </NavGroup>
            <Rule $m={19} />
            <Square $w={28} aria-label="More"><Art s={30} c="#000"><circle cx="15" cy="5" r="3" /><circle cx="15" cy="14" r="3" /><circle cx="15" cy="23" r="3" /></Art></Square>
            <Rule $m={19} />
            <Square aria-label="Close mapping"><Svg s={30} sw={1.700} stroke="#fff"><circle cx="15" cy="15" r="15" fill="#000" stroke="none" /><path d="M9 9L21 21M21 9L9 21" /></Svg></Square>
          </MappingBar>

          <Panels>
            <Card>
              <DesignHead>
                <Heading>Design</Heading>
                <Spacer />
                <Square aria-label="Arrange"><Svg s={30} sw={1.800}>{[1, 12, 22].map((y) => [1, 12, 22].map((x) => <rect key={x + "-" + y} x={x} y={y} width="7" height="7" />))}</Svg></Square>
                <Rule $h={30} $m={32} />
                <NavGroup $gap={36}>
                  <Square aria-label="Delete"><Svg s={30} sw={1.700}><rect x="3" y="5" width="24" height="4" rx="1" /><path d="M11 5V1H19V5M5 9V27Q5 29 7 29H23Q25 29 25 27V9M11 13V26M15 13V26M19 13V26" /></Svg></Square>
                  <Square aria-label="Cut"><Svg s={30} sw={1.700}><circle cx="6" cy="6" r="4.500" /><circle cx="6" cy="24" r="4.500" /><path d="M9 10L30 25M9 20L30 5" /></Svg></Square>
                  <Square aria-label="Copy"><Svg s={30} sw={1.800}><rect x="2" y="7" width="19" height="22" rx="1" /><path d="M9 2H25Q27 2 27 4V23H24" /></Svg></Square>
                  <Square aria-label="Paste"><Svg s={30} sw={1.700} stroke="#333"><path d="M8 5H2V29H27V5H21M9 8V5L12 4Q15-1 18 4L21 5V8Z" /><path d="M7 14H22M7 18H22M7 22H16" /></Svg></Square>
                </NavGroup>
                <Rule $h={30} $m={32} />
                <NavGroup $gap={36}>
                  <Square aria-label="Zoom in"><Svg s={30} sw={1.700}><circle cx="12" cy="12" r="11" /><path d="M20 20L29 29M8 12H16M12 8V16" /></Svg></Square>
                  <Square aria-label="Zoom out"><Svg s={30} sw={1.700}><circle cx="12" cy="12" r="11" /><path d="M20 20L29 29M8 12H16" /></Svg></Square>
                </NavGroup>
              </DesignHead>
              <DesignBody>
                <Palette>
                  <PaletteList>
                    <PaletteItems>
                      <PaletteItem><JoinerIcon />Joiner</PaletteItem>
                      <PaletteItem><LookupIcon />Lookup</PaletteItem>
                      <PaletteItem aria-label="Normalizer"><Art w={30} h={20}><path d="M1 1H14V20H1Z" fill="#555" /><path d="M3 3H12V20H3Z" fill="#ff5a10" /></Art></PaletteItem>
                    </PaletteItems>
                    <Thumb $w={7} $h={30} $top={64} />
                  </PaletteList>
                  <PaletteMore aria-label="More transformations"><Art s={18}><circle cx="9" cy="9" r="9" fill="#7a7a7a" /><g fill="#fff"><circle cx="4.500" cy="9" r="1.500" /><circle cx="9" cy="9" r="1.500" /><circle cx="13.500" cy="9" r="1.500" /></g></Art></PaletteMore>
                </Palette>
                <CanvasColumn>
                  <DesignCanvas />
                  <HorizontalTrack><Thumb $w={572} $h={7} /></HorizontalTrack>
                </CanvasColumn>
                <Thumb $w={8} $h={68} $top={5} />
              </DesignBody>
            </Card>

            <Splitter><i /><i /><i /></Splitter>

            <Card $grow>
              <PropertyHead>
                <PropertyTab $active>Properties</PropertyTab>
                <PropertyTab>Preview</PropertyTab>
                <HeadRule />
                <SelectedName><FxIcon />insertexp</SelectedName>
                <ViewButtons>
                  <Square aria-label="Minimize panel"><Svg s={30} sw={1.800}><rect x="1" y="1" width="28" height="28" rx="2" /><path d="M1 23H29" /></Svg></Square>
                  <Square aria-label="Split panel"><Svg s={30} sw={1.800} stroke="#c4c4c4"><rect x="1" y="1" width="28" height="28" rx="2" /><path d="M1 15H29" /></Svg></Square>
                  <Square aria-label="Maximize panel"><Svg s={30} sw={1.800}><rect x="1" y="1" width="28" height="28" rx="2" /><path d="M1 7H29" /></Svg></Square>
                </ViewButtons>
              </PropertyHead>
              <PropertyBody>
                <SectionNav>
                  <SectionList>
                    <SectionButton>General</SectionButton>
                    <SectionButton>Incoming Fields</SectionButton>
                    <SectionButton $active>Expression</SectionButton>
                    <SectionButton>Window</SectionButton>
                    <SectionButton>Advanced</SectionButton>
                  </SectionList>
                  <Thumb $w={8} $h={205} />
                </SectionNav>
                <Fields>
                  <FieldsHead>
                    <Heading $color="#444">Expressions</Heading>
                    <NavGroup $gap={24}>
                      <Square $w={24} $h={24} aria-label="Add field"><Svg s={24} sw={1.500}><circle cx="12" cy="12" r="11" /><path d="M6 12H18M12 6V18" /></Svg></Square>
                      <Square $w={24} $h={24} aria-label="Move up"><Svg s={24} sw={1.500} stroke="#c0c0c0"><circle cx="12" cy="12" r="11" /><path d="M6 14L12 8L18 14" /></Svg></Square>
                      <Square $w={24} $h={24} aria-label="Move down"><Svg s={24} sw={1.500} stroke="#c0c0c0"><circle cx="12" cy="12" r="11" /><path d="M6 10L12 16L18 10" /></Svg></Square>
                    </NavGroup>
                  </FieldsHead>
                  <FieldTable>
                    <colgroup><col /><col /><col /></colgroup>
                    <thead><tr><th>Field Name</th><th>Expression</th><th>Field Description</th></tr></thead>
                    <tbody>
                      {fields.map(([name, expression]) => (
                        <tr key={name}><td><a href="#">{name}</a></td><td><a href="#">{expression}</a></td><td /></tr>
                      ))}
                    </tbody>
                  </FieldTable>
                </Fields>
                <Thumb $w={7} $h={200} $top={37} />
              </PropertyBody>
            </Card>
          </Panels>
        </Main>
      </Workspace>

      <StatusStrip>
        <StatusBubble>https://apse1.dm-ap.informaticacloud.com/diUI/products/integrationDesign/#itb49_2</StatusBubble>
      </StatusStrip>

      <Taskbar>
        <Weather>
          <Art s={30}><defs><linearGradient id="sun" x1="0" y1="0" x2=".7" y2="1"><stop offset="0" stopColor="#f0c030" /><stop offset="1" stopColor="#f06a10" /></linearGradient></defs><circle cx="15" cy="15" r="15" fill="url(#sun)" /></Art>
          <div>84°F<span>Sunny</span></div>
        </Weather>
        <Apps>
          {apps.map(([name, icon, state]) => (
            <AppButton key={name} aria-label={name} $active={state === "active"}>
              {icon}
              <RunMark $on={state === "on"} $active={state === "active"} />
            </AppButton>
          ))}
        </Apps>
        <Tray>
          <NavGroup $gap={24}>
            <Svg w={20} h={24} sw={1.800} stroke="#111"><path d="M1 16L10 6L19 16" /></Svg>
            <Svg w={18} h={24} sw={1.800} stroke="#1450a0"><rect x="5" y="1" width="8" height="16" rx="4" /><path d="M1 11Q1 20 9 20T17 11M9 20V24" /></Svg>
          </NavGroup>
          <TrayStatus aria-label="Network, sound and battery">
            <Svg s={24} sw={1.900} stroke="#222"><path d="M1 9Q12-2 23 9M4 12Q12 4 20 12M8 15Q12 11 16 15" /><circle cx="12" cy="18" r="2" fill="#222" stroke="none" /></Svg>
            <Svg s={24} sw={1.700} stroke="#222"><path d="M1 7H5L11 2V19L5 14H1ZM14 7Q16 11 14 14" /><path d="M17 5Q20 11 17 16M20 2Q25 11 20 19" stroke="#b0b0b0" /></Svg>
            <Svg s={24} sw={1.700} stroke="#222"><rect x="1" y="4" width="20" height="14" rx="3" /><rect x="4" y="7" width="9" height="8" fill="#111" stroke="none" /><path d="M23 9V13" strokeWidth="2.500" /></Svg>
          </TrayStatus>
          <Clock>3:46 PM<br />10/7/2022</Clock>
        </Tray>
      </Taskbar>
    </Screen>
  );
}
